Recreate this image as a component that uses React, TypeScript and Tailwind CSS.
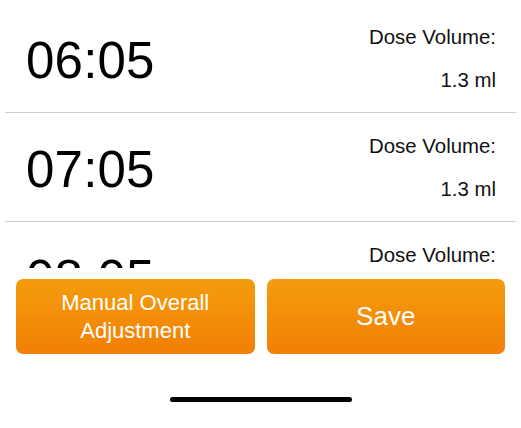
import React from "react";

const rows = [
  { time: "06:05", dose: "1.3 ml" },
  { time: "07:05", dose: "1.3 ml" },
  { time: "08:05", dose: "1.3 ml" },
];

export default function App() {
  return (
    <div
      className="flex h-[428px] w-[521px] flex-col overflow-hidden bg-white text-black"
      style={{ fontFamily: '"Liberation Sans", Arial, sans-serif' }}
    >
      <div className="h-[268px] shrink-0 overflow-hidden pt-[4px]">
        {rows.map((r) => (
          <div key={r.time} className="flex flex-col">
            <div className="flex h-[108px] items-start justify-between">
              <div className="pl-[26px] pt-[31px] text-[51px] leading-[51px] tracking-[0.2px]">{r.time}</div>
              <div className="flex flex-col items-end pr-[25px] pt-[22px] text-[20.4px] leading-[22px] text-[#111]">
                <div>Dose Volume:</div>
                <div className="mt-[21px]">{r.dose}</div>
              </div>
            </div>
            <div className="mx-[5px] h-px bg-[#cdcdd0]" />
          </div>
        ))}
      </div>
      <div className="flex flex-1 flex-col bg-white pt-[11px]">
        <div className="flex gap-[12px] px-[16px]">
          <button className="flex h-[75px] flex-1 flex-col items-center justify-center rounded-[7px] bg-gradient-to-b from-[#f49c0c] to-[#f17f06] text-[22px] leading-[28px] text-white">
            <span>Manual Overall</span>
            <span>Adjustment</span>
          </button>
          <button className="flex h-[75px] flex-1 items-center justify-center rounded-[7px] bg-gradient-to-b from-[#f49c0c] to-[#f17f06] text-[26px] text-white">
            Save
          </button>
        </div>
        <div className="mx-auto mt-[43px] h-[5px] w-[182px] rounded-full bg-black" />
      </div>
    </div>
  );
}
